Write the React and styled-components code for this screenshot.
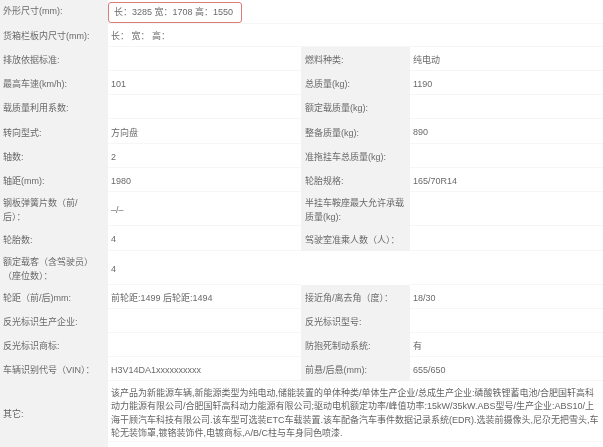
import React from "react";
import styled, { createGlobalStyle } from "styled-components";

const GlobalStyle = createGlobalStyle`
  html, body {
    margin: 0;
    padding: 0;
    background: #fff;
  }
`;

const Sheet = styled.div`
  width: 603px;
  height: 447px;
  overflow: hidden;
  background: linear-gradient(to right, #f2f2f2 108px, #fff 108px);
  font-family: "Liberation Sans", "Noto Sans CJK SC", sans-serif;
  font-size: 9px;
  color: #6a6a6a;
  filter: blur(0.5px);
`;

const Row = styled.div`
  display: grid;
  grid-template-columns: ${(p) => (p.$wide ? "108px 1fr" : "108px 193px 109px 193px")};
  height: ${(p) => p.$h}px;
`;

const Label = styled.div`
  display: flex;
  align-items: center;
  padding: 2px 0 0 3px;
  line-height: 14px;
  white-space: pre-line;
`;

const TopLabel = styled(Label)`
  padding: 0 0 3px 3px;
`;

const NoteLabel = styled(Label)`
  padding-top: 4px;
  color: #5f5f5f;
`;

const RightLabel = styled(Label)`
  padding-left: 4px;
  background: ${(p) => (p.$blank ? "#fff" : "#f2f2f2")};
`;

const Value = styled.div`
  display: flex;
  align-items: center;
  padding: 2px 0 0 3px;
  border-bottom: 1px solid #f6f6f6;
  box-sizing: border-box;
`;

const TopValue = styled(Value)`
  padding-top: 0;
`;

const Highlight = styled.span`
  box-sizing: border-box;
  display: flex;
  align-items: center;
  width: 134px;
  height: 21px;
  margin: 2px 0 0 -3px;
  padding: 0 0 2px 5px;
  border: 1px solid #dc7c78;
  border-radius: 3px;
  white-space: pre;
`;

const Note = styled.div`
  padding: 6px 0 0 3px;
  line-height: 13.3px;
  white-space: nowrap;
  color: #636363;
  border-bottom: 1px solid #f7f7f7;
`;

const NOTE_LINES = [
  "该产品为新能源车辆,新能源类型为纯电动,储能装置的单体种类/单体生产企业/总成生产企业:磷酸铁锂蓄电池/合肥国轩高科",
  "动力能源有限公司/合肥国轩高科动力能源有限公司;驱动电机额定功率/峰值功率:15kW/35kW.ABS型号/生产企业:ABS10/上",
  "海干顾汽车科技有限公司.该车型可选装ETC车载装置.该车配备汽车事件数据记录系统(EDR).选装前摄像头,尼尕无把雪头,车",
  "轮无装饰罩,镀铬装饰件,电镀商标,A/B/C柱与车身同色喷漆.",
];

const ROWS = [
  { h: 24, a: "排放依据标准:", b: "", c: "燃料种类:", d: "纯电动" },
  { h: 24, a: "最高车速(km/h):", b: "101", c: "总质量(kg):", d: "1190" },
  { h: 24, a: "载质量利用系数:", b: "", c: "额定载质量(kg):", d: "" },
  { h: 25, a: "转向型式:", b: "方向盘", c: "整备质量(kg):", d: "890" },
  { h: 24, a: "轴数:", b: "2", c: "准拖挂车总质量(kg):", d: "" },
  { h: 24, a: "轴距(mm):", b: "1980", c: "轮胎规格:", d: "165/70R14" },
  { h: 34, a: "钢板弹簧片数（前/\n后）：", b: "–/–", c: "半挂车鞍座最大允许承载\n质量(kg):", d: "" },
  { h: 25, a: "轮胎数:", b: "4", c: "驾驶室准乘人数（人）：", d: "" },
  { h: 34, a: "额定载客（含驾驶员）\n（座位数）：", b: "4", c: "", d: "" },
  { h: 24, a: "轮距（前/后)mm:", b: "前轮距:1499 后轮距:1494", c: "接近角/离去角（度）：", d: "18/30" },
  { h: 24, a: "反光标识生产企业:", b: "", c: "反光标识型号:", d: "" },
  { h: 24, a: "反光标识商标:", b: "", c: "防抱死制动系统:", d: "有" },
  { h: 24, a: "车辆识别代号（VIN）：", b: "H3V14DA1xxxxxxxxxx", c: "前悬/后悬(mm):", d: "655/650" },
];

export default function App() {
  return (
    <Sheet>
      <GlobalStyle />
      <Row $wide $h={23}>
        <TopLabel>外形尺寸(mm):</TopLabel>
        <TopValue>
          <Highlight>长：3285 宽：1708 高：1550</Highlight>
        </TopValue>
      </Row>
      <Row $wide $h={24}>
        <Label>货箱栏板内尺寸(mm):</Label>
        <Value>长： 宽： 高：</Value>
      </Row>
      {ROWS.map((row) => (
        <Row key={row.a} $h={row.h}>
          <Label>{row.a}</Label>
          <Value>{row.b}</Value>
          <RightLabel $blank={!row.c}>{row.c}</RightLabel>
          <Value>{row.d}</Value>
        </Row>
      ))}
      <Row $wide $h={61}>
        <NoteLabel>其它:</NoteLabel>
        <Note>
          {NOTE_LINES.map((line) => (
            <div key={line}>{line}</div>
          ))}
        </Note>
      </Row>
    </Sheet>
  );
}
